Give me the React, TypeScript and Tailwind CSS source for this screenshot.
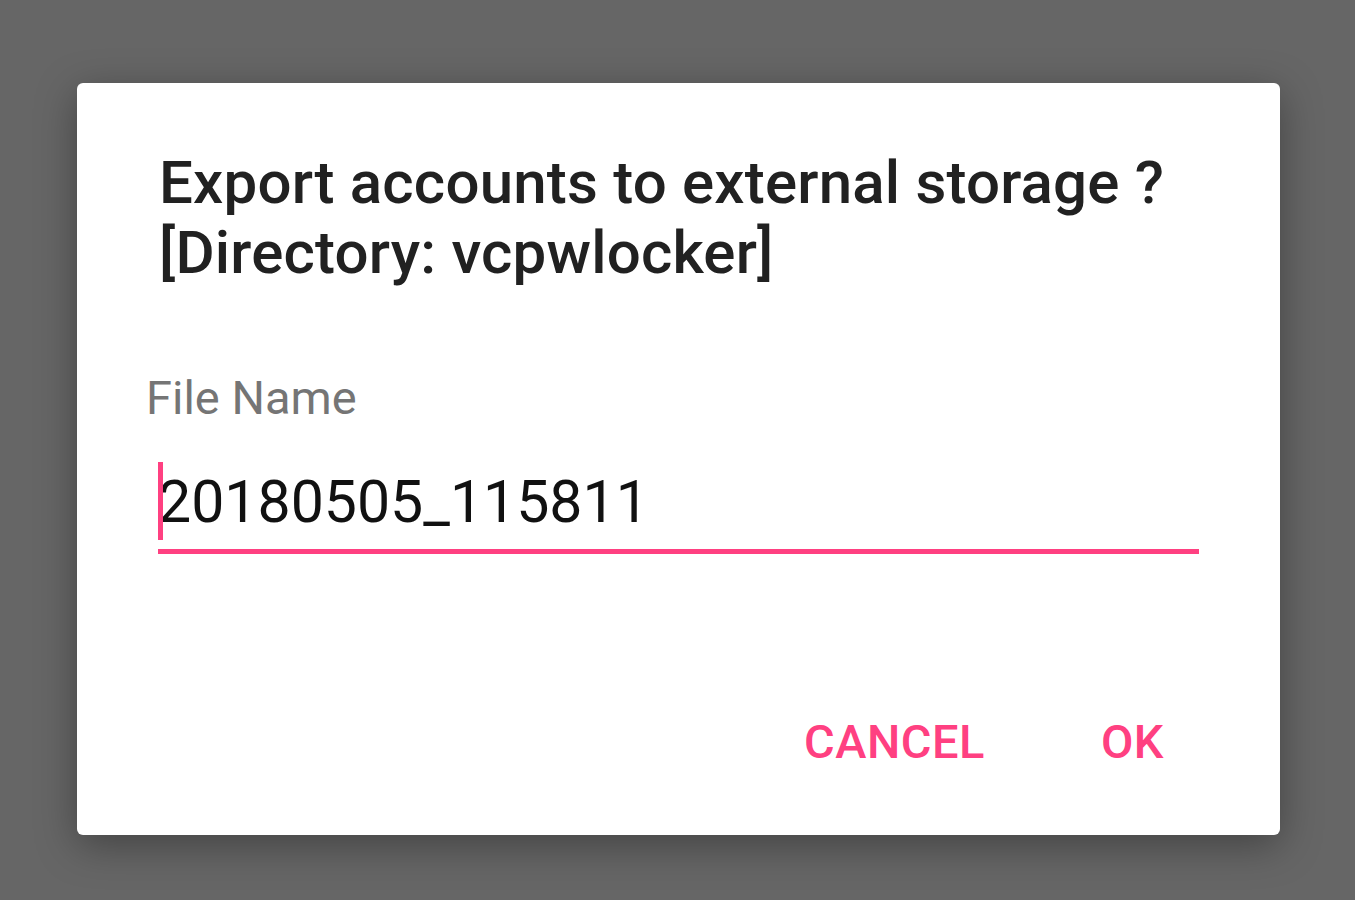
import React from 'react';

const App: React.FC = () => {
  return (
    <div
      className="w-[1355px] h-[900px] bg-[#666666] overflow-hidden pt-[83px] pl-[77px]"
      style={{ fontFamily: 'Roboto, "Noto Sans", sans-serif' }}
    >
      {/* Dialog */}
      <div className="w-[1203px] h-[752px] bg-white rounded-[6px] shadow-[0_10px_40px_rgba(0,0,0,0.35)] flex flex-col pt-[65px] pl-[82px] pr-[81px]">
        {/* Title */}
        <div className="text-[60px] leading-[70px] font-medium text-[#212121] tracking-[0.2px] whitespace-nowrap">
          <div>Export accounts to external storage ?</div>
          <div>[Directory: vcpwlocker]</div>
        </div>

        {/* Label */}
        <div className="mt-[83px] -ml-[13px] text-[47px] leading-[54px] text-[#757575]">
          File Name
        </div>

        {/* Input */}
        <div className="mt-[37px] -ml-[1px] relative">
          <div className="text-[59px] leading-[80px] text-[#111111] whitespace-nowrap">
            20180505_115811
          </div>
          <div className="absolute left-[0px] top-[0px] w-[5px] h-[78px] bg-[#ff4081]" />
          <div className="mt-[7px] h-[5px] bg-[#ff4081]" />
        </div>

        {/* Actions */}
        <div className="mt-[164px] flex justify-end gap-[116px] pr-[35px] text-[47px] leading-[47px] font-medium text-[#ff4081] tracking-[0.5px]">
          <span>CANCEL</span>
          <span>OK</span>
        </div>
      </div>
    </div>
  );
};

export default App;
